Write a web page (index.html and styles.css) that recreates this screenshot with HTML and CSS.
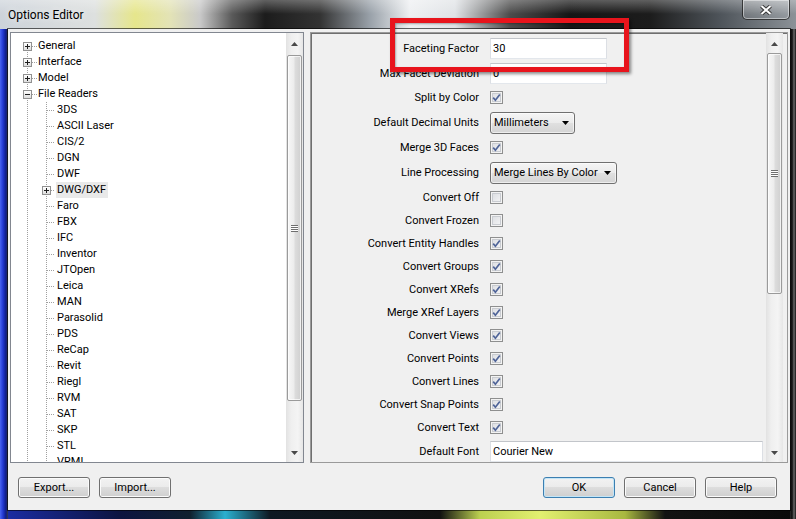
FILE: index.html
```html
<!DOCTYPE html>
<html lang="en">
	<head>
		<meta charset="UTF-8" />
		<title>Options Editor</title>
		<link rel="stylesheet" href="styles.css">
	</head>
	<body>
		<div class="window">
			<div class="titlebar">
				<span class="title">Options Editor</span>
				<div class="close">
					<svg width="12" height="10" viewBox="0 0 12 10">
						<path d="M1.5 1 L10.5 9 M10.5 1 L1.5 9" stroke="#3a3a3a" stroke-width="4" />
						<path d="M1.5 1 L10.5 9 M10.5 1 L1.5 9" stroke="#fff" stroke-width="2" />
					</svg>
				</div>
			</div>
			<div class="client">
				<div class="panes">
					<div class="tree">
						<ul class="tree-list">
							<li class="node top first"><span class="gut"><span class="exp"></span></span><span class="txt">General</span></li>
							<li class="node top"><span class="gut"><span class="exp"></span></span><span class="txt">Interface</span></li>
							<li class="node top"><span class="gut"><span class="exp"></span></span><span class="txt">Model</span></li>
							<li class="node top"><span class="gut"><span class="exp open"></span></span><span class="txt">File Readers</span></li>
							<li class="node"><span class="gut"></span><span class="gut2"></span><span class="txt">3DS</span></li>
							<li class="node"><span class="gut"></span><span class="gut2"></span><span class="txt">ASCII Laser</span></li>
							<li class="node"><span class="gut"></span><span class="gut2"></span><span class="txt">CIS/2</span></li>
							<li class="node"><span class="gut"></span><span class="gut2"></span><span class="txt">DGN</span></li>
							<li class="node"><span class="gut"></span><span class="gut2"></span><span class="txt">DWF</span></li>
							<li class="node"><span class="gut"></span><span class="gut2 has-exp"><span class="exp"></span></span><span class="txt sel">DWG/DXF</span></li>
							<li class="node"><span class="gut"></span><span class="gut2"></span><span class="txt">Faro</span></li>
							<li class="node"><span class="gut"></span><span class="gut2"></span><span class="txt">FBX</span></li>
							<li class="node"><span class="gut"></span><span class="gut2"></span><span class="txt">IFC</span></li>
							<li class="node"><span class="gut"></span><span class="gut2"></span><span class="txt">Inventor</span></li>
							<li class="node"><span class="gut"></span><span class="gut2"></span><span class="txt">JTOpen</span></li>
							<li class="node"><span class="gut"></span><span class="gut2"></span><span class="txt">Leica</span></li>
							<li class="node"><span class="gut"></span><span class="gut2"></span><span class="txt">MAN</span></li>
							<li class="node"><span class="gut"></span><span class="gut2"></span><span class="txt">Parasolid</span></li>
							<li class="node"><span class="gut"></span><span class="gut2"></span><span class="txt">PDS</span></li>
							<li class="node"><span class="gut"></span><span class="gut2"></span><span class="txt">ReCap</span></li>
							<li class="node"><span class="gut"></span><span class="gut2"></span><span class="txt">Revit</span></li>
							<li class="node"><span class="gut"></span><span class="gut2"></span><span class="txt">Riegl</span></li>
							<li class="node"><span class="gut"></span><span class="gut2"></span><span class="txt">RVM</span></li>
							<li class="node"><span class="gut"></span><span class="gut2"></span><span class="txt">SAT</span></li>
							<li class="node"><span class="gut"></span><span class="gut2"></span><span class="txt">SKP</span></li>
							<li class="node"><span class="gut"></span><span class="gut2"></span><span class="txt">STL</span></li>
							<li class="node"><span class="gut"></span><span class="gut2"></span><span class="txt">VRML</span></li>
						</ul>
						<div class="vscroll">
							<div class="sb-arrow"><svg width="7" height="4"><path d="M0 4h7L3.5 0z" fill="#4a4a4a" /></svg></div>
							<div class="sb-track"><div class="sb-thumb tree-thumb"><span class="grip"></span></div></div>
							<div class="sb-arrow"><svg width="7" height="4"><path d="M0 0h7L3.5 4z" fill="#4a4a4a" /></svg></div>
						</div>
					</div>
					<div class="props">
						<div class="prop-grid">
							<span class="lbl">Faceting Factor</span>
							<span class="field">30</span>
							<span class="lbl">Max Facet Deviation</span>
							<span class="field">0</span>
							<span class="lbl">Split by Color</span>
							<span class="cb"><svg width="11" height="11"><path d="M2.2 5.6 L4.4 8.2 L8.8 2.4" stroke="#4f6498" stroke-width="1.7" fill="none" /></svg></span>
							<span class="lbl">Default Decimal Units</span>
							<span class="combo units">Millimeters<svg width="7" height="4"><path d="M0 0h7L3.5 4z" fill="#000" /></svg></span>
							<span class="lbl">Merge 3D Faces</span>
							<span class="cb"><svg width="11" height="11"><path d="M2.2 5.6 L4.4 8.2 L8.8 2.4" stroke="#4f6498" stroke-width="1.7" fill="none" /></svg></span>
							<span class="lbl">Line Processing</span>
							<span class="combo lines">Merge Lines By Color<svg width="7" height="4"><path d="M0 0h7L3.5 4z" fill="#000" /></svg></span>
							<span class="lbl">Convert Off</span>
							<span class="cb"></span>
							<span class="lbl">Convert Frozen</span>
							<span class="cb"></span>
							<span class="lbl">Convert Entity Handles</span>
							<span class="cb"><svg width="11" height="11"><path d="M2.2 5.6 L4.4 8.2 L8.8 2.4" stroke="#4f6498" stroke-width="1.7" fill="none" /></svg></span>
							<span class="lbl">Convert Groups</span>
							<span class="cb"><svg width="11" height="11"><path d="M2.2 5.6 L4.4 8.2 L8.8 2.4" stroke="#4f6498" stroke-width="1.7" fill="none" /></svg></span>
							<span class="lbl">Convert XRefs</span>
							<span class="cb"><svg width="11" height="11"><path d="M2.2 5.6 L4.4 8.2 L8.8 2.4" stroke="#4f6498" stroke-width="1.7" fill="none" /></svg></span>
							<span class="lbl">Merge XRef Layers</span>
							<span class="cb"><svg width="11" height="11"><path d="M2.2 5.6 L4.4 8.2 L8.8 2.4" stroke="#4f6498" stroke-width="1.7" fill="none" /></svg></span>
							<span class="lbl">Convert Views</span>
							<span class="cb"><svg width="11" height="11"><path d="M2.2 5.6 L4.4 8.2 L8.8 2.4" stroke="#4f6498" stroke-width="1.7" fill="none" /></svg></span>
							<span class="lbl">Convert Points</span>
							<span class="cb"><svg width="11" height="11"><path d="M2.2 5.6 L4.4 8.2 L8.8 2.4" stroke="#4f6498" stroke-width="1.7" fill="none" /></svg></span>
							<span class="lbl">Convert Lines</span>
							<span class="cb"><svg width="11" height="11"><path d="M2.2 5.6 L4.4 8.2 L8.8 2.4" stroke="#4f6498" stroke-width="1.7" fill="none" /></svg></span>
							<span class="lbl">Convert Snap Points</span>
							<span class="cb"><svg width="11" height="11"><path d="M2.2 5.6 L4.4 8.2 L8.8 2.4" stroke="#4f6498" stroke-width="1.7" fill="none" /></svg></span>
							<span class="lbl">Convert Text</span>
							<span class="cb"><svg width="11" height="11"><path d="M2.2 5.6 L4.4 8.2 L8.8 2.4" stroke="#4f6498" stroke-width="1.7" fill="none" /></svg></span>
							<span class="lbl">Default Font</span>
							<span class="field wide">Courier New</span>
						</div>
						<div class="vscroll right">
							<div class="sb-arrow"><svg width="7" height="4"><path d="M0 4h7L3.5 0z" fill="#4a4a4a" /></svg></div>
							<div class="sb-track"><div class="sb-thumb prop-thumb"><span class="grip"></span></div></div>
							<div class="sb-arrow"><svg width="7" height="4"><path d="M0 0h7L3.5 4z" fill="#4a4a4a" /></svg></div>
						</div>
					</div>
				</div>
				<div class="footer">
					<button class="btn">Export...</button>
					<button class="btn">Import...</button>
					<button class="btn default">OK</button>
					<button class="btn">Cancel</button>
					<button class="btn">Help</button>
				</div>
			</div>
			<!-- red frame drawn over the first option row -->
			<div class="mark"></div>
		</div>
	</body>
</html>
```

FILE: styles.css
```css
* {
	margin: 0;
	padding: 0;
	box-sizing: border-box;
	list-style: none;
}
html,
body {
	width: 796px;
	height: 519px;
	overflow: hidden;
}
body {
	font: 11px Roboto, "Liberation Sans", sans-serif;
	color: #000;
	background:
		linear-gradient(rgba(255, 255, 255, 0.3), rgba(255, 255, 255, 0) 14px) 0 0 / 100% 29px no-repeat,
		linear-gradient(to right, #cdd3da 0, #dde0df 95px, #e6e68c 135px, #e3e3b6 170px, #c9c9c9 200px, #5a5a5a 232px, #1c1c1c 265px, #333 320px, #99a1a9 370px, #eef0f2 410px, #e0e3e6 455px, #4c4c4c 510px, #161616 570px, #1c1c1c 650px, #4e545a 720px, #8c9298 796px) 0 0 / 100% 29px no-repeat,
		linear-gradient(to right, #4a66f2 0, #2238d0 3px, #0e1c86 6px, #3a3e48 8px) 0 29px / 8px 100% no-repeat,
		linear-gradient(to right, #2a2a2a 0, #0c0c0c 2px, #6a6a6a 4px, #141414 6px) right 29px / 6px 100% no-repeat,
		linear-gradient(to right, #1c2ea8 0, #0c1440 120px, #10202e 190px, #2ab0d0 225px, #0e1822 270px, #111 440px, #bcd050 480px, #e2f070 540px, #a8b840 625px, #121212 665px, #0a0a0a 796px) 0 bottom / 100% 9px no-repeat,
		#1a1a1a;
}
.window {
	position: relative;
	height: 519px;
	display: flex;
	flex-direction: column;
}

/* title bar */
.titlebar {
	height: 29px;
	display: flex;
	align-items: flex-start;
	padding-left: 8px;
}
.title {
	font-size: 12px;
	line-height: 30px;
	text-shadow: 0 0 6px rgba(255, 255, 255, 0.9);
}
.close {
	margin-left: auto;
	margin-right: 6px;
	width: 48px;
	height: 20px;
	display: flex;
	align-items: center;
	justify-content: center;
	border: 1px solid rgba(20, 20, 20, 0.75);
	border-top: none;
	border-radius: 0 0 5px 5px;
	background: linear-gradient(rgba(255, 255, 255, 0.28), rgba(255, 255, 255, 0.08));
	box-shadow: inset 0 0 0 1px rgba(255, 255, 255, 0.45);
}

/* dialog body */
.client {
	margin: 0 6px 9px 8px;
	flex: 1;
	background: #f0f0f0;
	box-shadow: 0 0 0 1px rgba(0, 0, 0, 0.6);
	padding: 3px 2px 0;
	display: flex;
	flex-direction: column;
}
.panes {
	display: flex;
	gap: 6px;
	height: 431px;
}

/* tree */
.tree {
	width: 294px;
	background: #fff;
	border: 1px solid #828790;
	display: flex;
}
.tree-list {
	flex: 1;
	overflow: hidden;
	padding-top: 5px;
}
.node {
	display: flex;
	height: 16px;
	line-height: 16px;
	white-space: nowrap;
}
.gut {
	width: 26px;
	flex: none;
	background: repeating-linear-gradient(#a0a0a0 0 1px, transparent 1px 2px) 16px 0 / 1px 100% no-repeat;
}
.top .gut {
	background:
		repeating-linear-gradient(to right, #a0a0a0 0 1px, transparent 1px 2px) 21px 8px / 5px 1px no-repeat,
		repeating-linear-gradient(#a0a0a0 0 1px, transparent 1px 2px) 16px 0 / 1px 100% no-repeat;
}
.first .gut {
	background:
		repeating-linear-gradient(to right, #a0a0a0 0 1px, transparent 1px 2px) 21px 8px / 5px 1px no-repeat,
		repeating-linear-gradient(#a0a0a0 0 1px, transparent 1px 2px) 16px 8px / 1px 8px no-repeat;
}
.gut2 {
	width: 19px;
	flex: none;
	background:
		repeating-linear-gradient(to right, #a0a0a0 0 1px, transparent 1px 2px) 10px 8px / 8px 1px no-repeat,
		repeating-linear-gradient(#a0a0a0 0 1px, transparent 1px 2px) 9px 0 / 1px 100% no-repeat;
}
.gut2.has-exp {
	background:
		repeating-linear-gradient(to right, #a0a0a0 0 1px, transparent 1px 2px) 14px 8px / 4px 1px no-repeat,
		repeating-linear-gradient(#a0a0a0 0 1px, transparent 1px 2px) 9px 0 / 1px 100% no-repeat;
}
.exp {
	display: block;
	width: 9px;
	height: 9px;
	margin: 4px 0 0 12px;
	border: 1px solid #919191;
	background:
		linear-gradient(#1e1e1e, #1e1e1e) 1px 3px / 5px 1px no-repeat,
		linear-gradient(#1e1e1e, #1e1e1e) 3px 1px / 1px 5px no-repeat,
		linear-gradient(#fff, #dedede);
}
.exp.open {
	background:
		linear-gradient(#1e1e1e, #1e1e1e) 1px 3px / 5px 1px no-repeat,
		linear-gradient(#fff, #dedede);
}
.has-exp .exp {
	margin-left: 5px;
}
.txt {
	padding: 0 2px 0 1px;
}
.sel {
	background: #e9e9e9;
}

/* scroll bars */
.vscroll {
	width: 17px;
	flex: none;
	display: flex;
	flex-direction: column;
	padding: 2px 0 1px;
	background: linear-gradient(to right, #e2e2e2, #efefef 30%, #f4f4f4 70%, #e6e6e6);
}
.vscroll.right {
	margin-right: 4px;
}
.sb-arrow {
	height: 17px;
	display: flex;
	align-items: center;
	justify-content: center;
}
.sb-track {
	flex: 1;
}
.sb-thumb {
	margin: 0 1px;
	border: 1px solid #9a9a9a;
	border-radius: 2px;
	background: linear-gradient(to right, #f7f7f7, #ececec 45%, #dcdcdc 55%, #cfcfcf);
	box-shadow: inset 0 0 0 1px rgba(255, 255, 255, 0.7);
	display: flex;
	align-items: center;
	justify-content: center;
}
.tree-thumb {
	margin-top: 3px;
	height: 346px;
}
.prop-thumb {
	margin-top: 1px;
	height: 241px;
}
.grip {
	width: 7px;
	height: 7px;
	background: repeating-linear-gradient(#6e6e6e 0 1px, #fdfdfd 1px 2px);
}

/* option list */
.props {
	width: 478px;
	border: 1px solid #9a9a9a;
	box-shadow: inset 1px 1px 0 #6f6f6f;
	display: flex;
	background: #f0f0f0;
}
.prop-grid {
	flex: 1;
	display: grid;
	grid-template-columns: 168px 1fr;
	grid-template-rows: 25px 24px 25px 25px 25px 25px 24px repeat(10, 23px) 24px;
	column-gap: 11px;
	align-items: center;
	padding-top: 3px;
	overflow: hidden;
}
.lbl {
	text-align: right;
	white-space: nowrap;
}
.field {
	width: 117px;
	height: 21px;
	line-height: 19px;
	padding-left: 2px;
	background: #fff;
	border: 1px solid;
	border-color: #c2c5ca #dcdfe4 #e3e7ec #dcdfe4;
}
.field.wide {
	width: 273px;
}
.combo {
	height: 22px;
	display: flex;
	align-items: center;
	justify-content: space-between;
	padding: 0 5px 0 3px;
	border: 1px solid #707070;
	border-radius: 3px;
	background: linear-gradient(#f5f5f5, #ebebeb 50%, #e0e0e0 50%, #d4d4d4);
	box-shadow: inset 0 0 0 1px rgba(255, 255, 255, 0.6);
	white-space: nowrap;
}
.combo.units {
	width: 85px;
}
.combo.lines {
	width: 127px;
}
.cb {
	width: 13px;
	height: 13px;
	border: 1px solid #8e8f8f;
	background: linear-gradient(135deg, #d9dbdf, #f7f7f8);
	box-shadow: inset 0 0 0 1px #f3f3f3, inset 0 0 0 2px #c9ccd1;
	display: flex;
}

/* buttons */
.footer {
	display: flex;
	gap: 9px;
	margin-top: 14px;
	padding: 0 11px 0 8px;
}
.btn {
	width: 72px;
	height: 21px;
	font: inherit;
	color: #000;
	border: 1px solid #707070;
	border-radius: 3px;
	background: linear-gradient(#f2f2f2, #ebebeb 50%, #dddddd 50%, #cfcfcf);
	box-shadow: inset 0 0 0 1px #fbfbfb;
}
.btn.default {
	margin-left: auto;
	border-color: #3c7fb1;
	box-shadow: inset 0 0 0 1px #c4e5f6;
}

/* red frame */
.mark {
	position: absolute;
	left: 390px;
	top: 18px;
	width: 239px;
	height: 54px;
	border: 5px solid #e8141c;
	box-shadow: 2px 2px 3px rgba(0, 0, 0, 0.45), inset 1px 1px 2px rgba(0, 0, 0, 0.3);
}
```
